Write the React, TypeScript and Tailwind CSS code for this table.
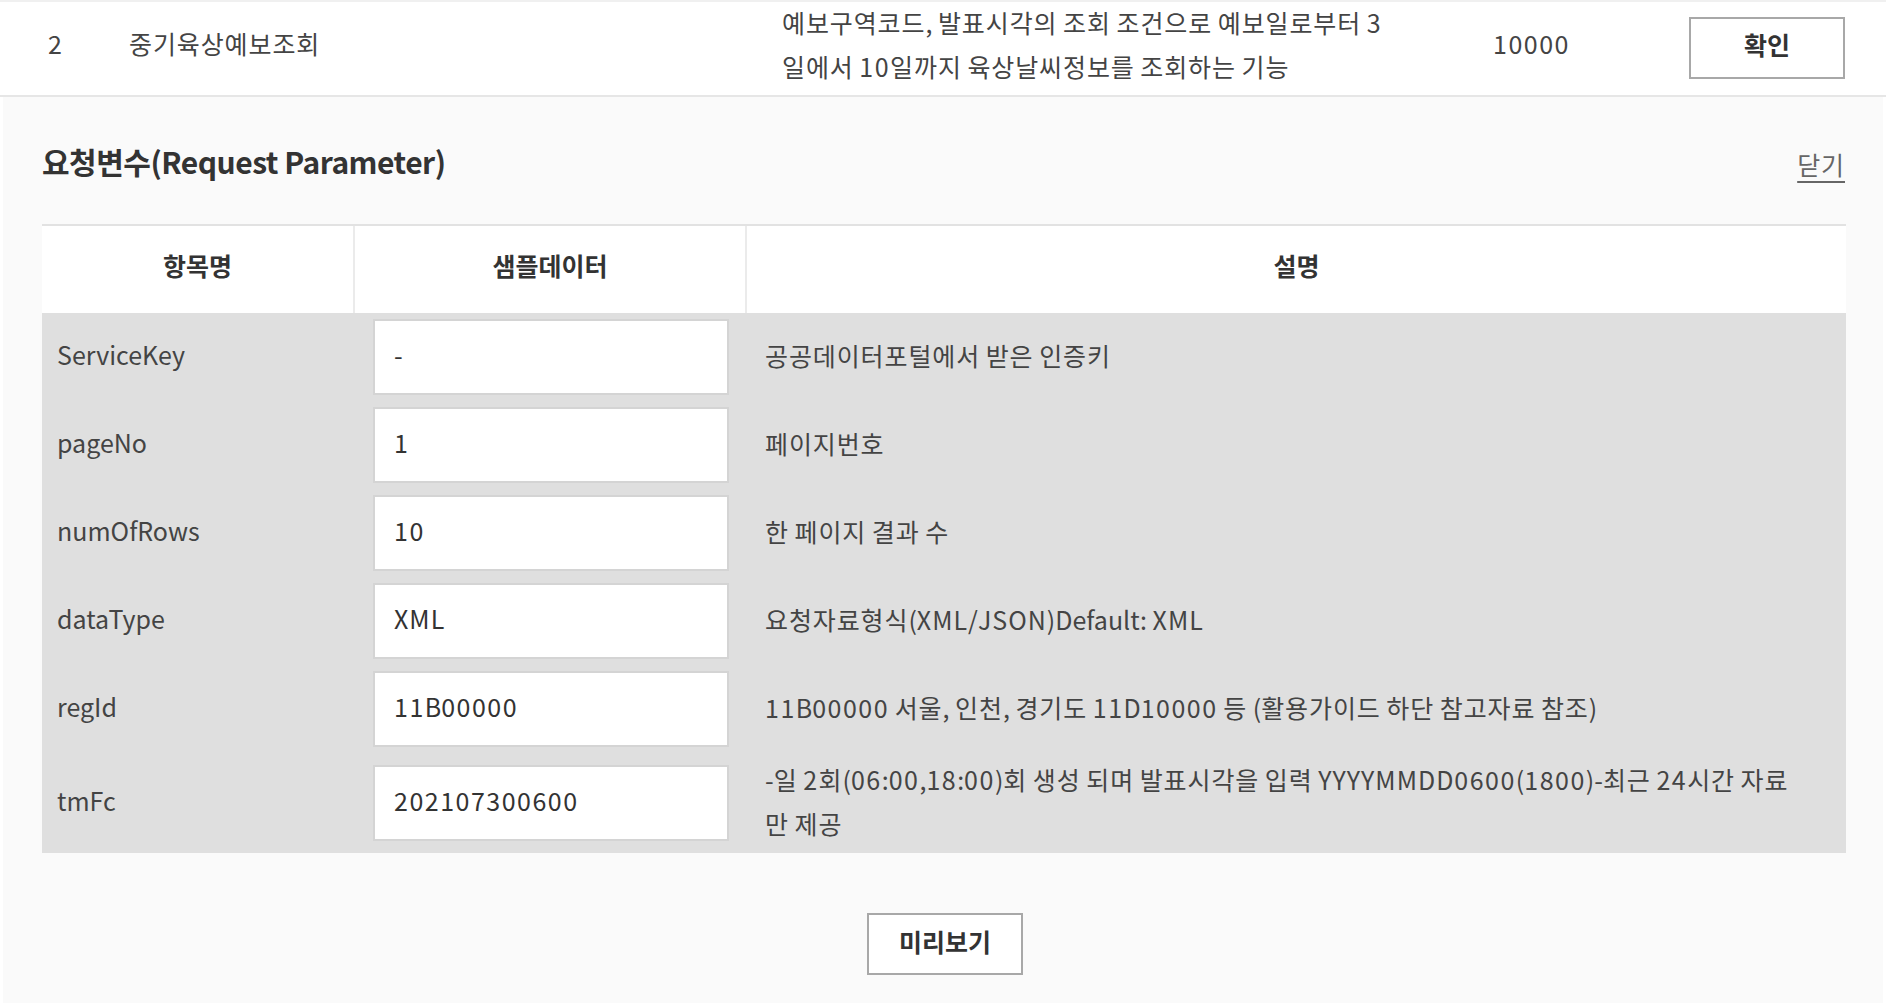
import React from "react";

function T({ t }: { t: string }) {
  const parts = t.split(/([0-9]+|[A-Z]{2,}|[\uAC00-\uD7A3]+)/);
  return (
    <>
      {parts.map((p, i) =>
        /^[0-9]+$/.test(p) ? (
          <span key={i} className="tracking-[1.5px]">
            {p}
          </span>
        ) : /^[A-Z]{2,}$/.test(p) ? (
          <span key={i} className="tracking-[1px]">
            {p}
          </span>
        ) : /^[\uAC00-\uD7A3]+$/.test(p) ? (
          <span key={i} className="tracking-[0.9px]">
            {p}
          </span>
        ) : (
          <React.Fragment key={i}>{p}</React.Fragment>
        )
      )}
    </>
  );
}

const rows: { name: string; sample: string; desc: string[] }[] = [
  { name: "ServiceKey", sample: "-", desc: ["공공데이터포털에서 받은 인증키"] },
  { name: "pageNo", sample: "1", desc: ["페이지번호"] },
  { name: "numOfRows", sample: "10", desc: ["한 페이지 결과 수"] },
  { name: "dataType", sample: "XML", desc: ["요청자료형식(XML/JSON)Default: XML"] },
  { name: "regId", sample: "11B00000", desc: ["11B00000 서울, 인천, 경기도 11D10000 등 (활용가이드 하단 참고자료 참조)"] },
  {
    name: "tmFc",
    sample: "202107300600",
    desc: ["-일 2회(06:00,18:00)회 생성 되며 발표시각을 입력 YYYYMMDD0600(1800)-최근 24시간 자료", "만 제공"],
  },
];

export default function App() {
  return (
    <div className="w-[1886px] h-[1003px] bg-white font-['Noto_Sans_CJK_KR','Noto_Sans',sans-serif] text-[25px] text-[#444] overflow-hidden">
      {/* top row */}
      <div className="h-[97px] border-t-2 border-b-2 border-t-[#f0f0f0] border-b-[#e6e6e6] flex items-center">
        <div className="w-[129px] pl-[48px] pb-[10px]">
          <T t="2" />
        </div>
        <div className="w-[653px] pb-[10px]">
          <T t="중기육상예보조회" />
        </div>
        <div className="w-[711px] leading-[44px] pb-[10px] whitespace-nowrap">
          <T t="예보구역코드, 발표시각의 조회 조건으로 예보일로부터 3" />
          <br />
          <T t="일에서 10일까지 육상날씨정보를 조회하는 기능" />
        </div>
        <div className="w-[196px] pb-[10px]">
          <T t="10000" />
        </div>
        <button className="w-[156px] h-[62px] border-2 border-[#a8a8a8] bg-white font-bold text-[#333] text-[25px] pb-[5px] mb-[2px]">
          확인
        </button>
      </div>

      {/* detail section */}
      <div className="mx-[3px] bg-[#fafafa] h-[906px] px-[39px]">
        <div className="flex items-center justify-between h-[127px] pt-[4px]">
          <h3 className="text-[30px] font-bold text-[#333] tracking-[-0.5px] pb-[2px]">요청변수(Request Parameter)</h3>
          <a className="text-[25px] text-[#666] underline underline-offset-[6px] mr-[-1px] pt-[4px] tracking-[0.9px]">닫기</a>
        </div>

        <div className="w-[1804px]">
          <div className="grid grid-cols-[313px_392px_1fr] h-[89px] bg-white border-t-2 border-[#e2e2e2] font-bold text-[#333]">
            <div className="flex items-center justify-center border-r-2 border-[#ebebeb] pb-[8px]">항목명</div>
            <div className="flex items-center justify-center border-r-2 border-[#ebebeb] pb-[8px]">샘플데이터</div>
            <div className="flex items-center justify-center pb-[8px]">설명</div>
          </div>
          <div className="bg-[#dfdfdf]">
            {rows.map((r) => (
              <div key={r.name} className="grid grid-cols-[313px_392px_1fr] items-center">
                <div className="pl-[15px] pb-[4px]">{r.name}</div>
                <div className="px-[18px] py-[6px]">
                  <div className="h-[76px] bg-white border-2 border-[#d4d4d4] flex items-center pl-[19px] pb-[4px] text-[#333]">
                    <T t={r.sample} />
                  </div>
                </div>
                <div className={`pl-[18px] pr-[18px] leading-[44px] whitespace-nowrap ${r.desc.length > 1 ? "pt-[4px] pb-[8px]" : "pb-[4px]"}`}>
                  {r.desc.map((line, i) => (
                    <div key={i}>
                      <T t={line} />
                    </div>
                  ))}
                </div>
              </div>
            ))}
          </div>
        </div>

        <div className="flex justify-center pt-[60px]">
          <button className="w-[156px] h-[62px] border-2 border-[#a8a8a8] bg-white font-bold text-[#333] text-[25px] ml-[4px] pb-[5px]">
            미리보기
          </button>
        </div>
      </div>
    </div>
  );
}
